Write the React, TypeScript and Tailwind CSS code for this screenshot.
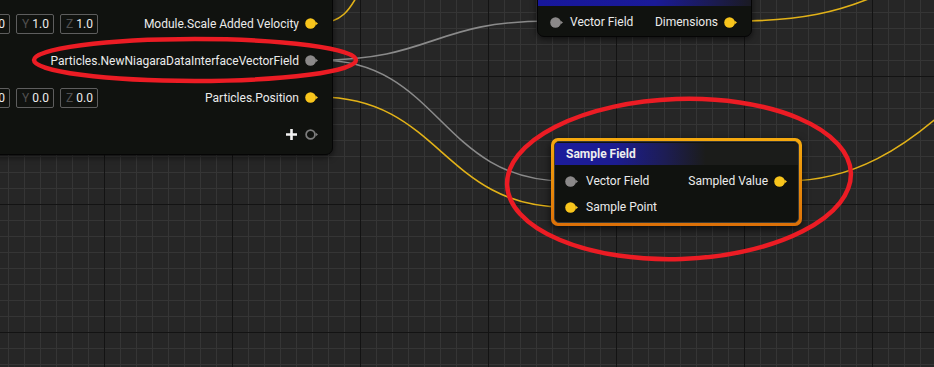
import React from 'react';

type PinKind = 'vector' | 'object' | 'add';

function Pin({ kind }: { kind: PinKind }) {
  if (kind === 'add') {
    return (
      <svg width="14" height="11" viewBox="0 0 14 11" className="shrink-0">
        <circle cx="5.5" cy="5.5" r="4.4" fill="none" stroke="#7d7d7d" strokeWidth="1.7" />
        <path d="M10.6 3.6 L13 5.5 L10.6 7.4 Z" fill="#7d7d7d" />
      </svg>
    );
  }
  const color = kind === 'vector' ? '#f8c51c' : '#8b8989';
  return (
    <svg width="14" height="11" viewBox="0 0 14 11" className="shrink-0">
      <circle cx="5.5" cy="5.5" r="5.3" fill={color} />
      <path d="M10.4 3.5 L13 5.5 L10.4 7.5 Z" fill={color} />
    </svg>
  );
}

function VecBox({ axis, value }: { axis: string; value: string }) {
  return (
    <div className="flex h-[20px] w-[38px] items-center justify-between rounded-[2px] border border-[#5e5e5e] pl-[5px] pr-[4px]">
      <span className="text-[#505050]">{axis}</span>
      <span className="text-[#ececec]">{value}</span>
    </div>
  );
}

function OutRow({ label, kind }: { label: string; kind: PinKind }) {
  return (
    <div className="flex items-center gap-[6px]">
      <span className="text-[#ebebeb]">{label}</span>
      <Pin kind={kind} />
    </div>
  );
}

export default function App() {
  return (
    <div
      className="relative h-[367px] w-[934px] overflow-hidden bg-[#262626] bg-[linear-gradient(to_right,#131313_1px,transparent_1px),linear-gradient(to_bottom,#131313_1px,transparent_1px),linear-gradient(to_right,#353535_1px,transparent_1px),linear-gradient(to_bottom,#353535_1px,transparent_1px)] bg-[size:128px_128px,128px_128px,16px_16px,16px_16px] bg-[position:104px_76px,104px_76px,8px_12px,8px_12px] text-[12px] font-['Roboto',sans-serif]"
    >
      {/* wires sit under the nodes */}
      <svg className="absolute inset-0" width="934" height="367" fill="none">
        <path d="M319 23 C340 23 350 12 362 -14" stroke="#e2b218" strokeWidth="1.6" />
        <path d="M319 60 C433 60 433 21 549 21" stroke="#8a8a8a" strokeWidth="1.6" />
        <path d="M319 60 C440 60 440 181 565 181" stroke="#8a8a8a" strokeWidth="1.6" />
        <path d="M319 97 C440 97 443 207 565 207" stroke="#e2b218" strokeWidth="1.6" />
        <path d="M737 21 C800 21 840 12 880 -6" stroke="#e2b218" strokeWidth="1.6" />
        <path d="M786 181 C852 181 905 150 962 95" stroke="#e2b218" strokeWidth="1.6" />
      </svg>

      {/* module node, cut off at the top left */}
      <div className="absolute left-[-60px] top-[-12px] flex h-[167px] w-[393px] flex-col rounded-[7px] border border-[#050505] bg-[#10120f] pl-[31px] pr-[13px] pt-[16px] shadow-[0_2px_6px_rgba(0,0,0,0.6)]">
        <div className="flex h-[37px] items-center justify-between">
          <div className="flex gap-[6px]">
            <VecBox axis="X" value="1.0" />
            <VecBox axis="Y" value="1.0" />
            <VecBox axis="Z" value="1.0" />
          </div>
          <OutRow label="Module.Scale Added Velocity" kind="vector" />
        </div>
        <div className="flex h-[37px] items-center justify-end">
          <OutRow label="Particles.NewNiagaraDataInterfaceVectorField" kind="object" />
        </div>
        <div className="flex h-[37px] items-center justify-between">
          <div className="flex gap-[6px]">
            <VecBox axis="X" value="0.0" />
            <VecBox axis="Y" value="0.0" />
            <VecBox axis="Z" value="0.0" />
          </div>
          <OutRow label="Particles.Position" kind="vector" />
        </div>
        <div className="flex h-[37px] items-center justify-end gap-[8px]">
          <svg width="11" height="11" viewBox="0 0 11 11">
            <path d="M5.5 0 V11 M0 5.5 H11" stroke="#f2f2f2" strokeWidth="2.6" />
          </svg>
          <Pin kind="add" />
        </div>
      </div>

      {/* vector field node, cut off at the top */}
      <div className="absolute left-[537px] top-[-30px] flex h-[67px] w-[215px] flex-col overflow-hidden rounded-[7px] border border-[#050505] bg-[#10120f] shadow-[0_2px_6px_rgba(0,0,0,0.6)]">
        <div className="h-[35px] shrink-0 bg-[linear-gradient(to_right,#17179c_0%,#1a1a98_55%,#1b1b4a_85%,#1a1a22_100%)]" />
        <div className="flex h-[31px] items-center justify-between pl-[12px] pr-[13px] pt-[2px]">
          <div className="flex items-center gap-[6px]">
            <Pin kind="object" />
            <span className="text-[#ebebeb]">Vector Field</span>
          </div>
          <OutRow label="Dimensions" kind="vector" />
        </div>
      </div>

      {/* selected Sample Field node */}
      <div className="absolute left-[551px] top-[138px] h-[88px] w-[251px] rounded-[7px] bg-[linear-gradient(to_bottom,#f5a90e,#dc7008)] p-[3px] shadow-[0_3px_8px_rgba(0,0,0,0.7)]">
        <div className="flex h-full flex-col overflow-hidden rounded-[5px] border border-[#3a3a35] bg-[#10120f]">
          <div className="mt-[1px] flex h-[22px] shrink-0 items-center bg-[#1b1c1a] bg-[linear-gradient(to_right,#1c1c9c_0%,#1c1c90_25%,#1d1d55_45%,rgba(27,28,26,0)_62%)] pl-[11px] font-bold text-[#eeeeee]">
            Sample Field
          </div>
          <div className="flex flex-col pt-[3px]">
            <div className="flex h-[26px] items-center justify-between pl-[10px] pr-[10px]">
              <div className="flex items-center gap-[7px]">
                <Pin kind="object" />
                <span className="text-[#ebebeb]">Vector Field</span>
              </div>
              <OutRow label="Sampled Value" kind="vector" />
            </div>
            <div className="flex h-[26px] items-center pl-[10px]">
              <div className="flex items-center gap-[7px]">
                <Pin kind="vector" />
                <span className="text-[#ebebeb]">Sample Point</span>
              </div>
            </div>
          </div>
        </div>
      </div>

      {/* red annotation ellipses on top */}
      <svg className="pointer-events-none absolute inset-0" width="934" height="367" fill="none">
        <ellipse cx="195" cy="60" rx="161" ry="21" stroke="#ec1c24" strokeWidth="4.5" />
        <ellipse cx="679" cy="179" rx="172" ry="80" stroke="#ec1c24" strokeWidth="4.5" transform="rotate(-2 679 179)" />
      </svg>
    </div>
  );
}
